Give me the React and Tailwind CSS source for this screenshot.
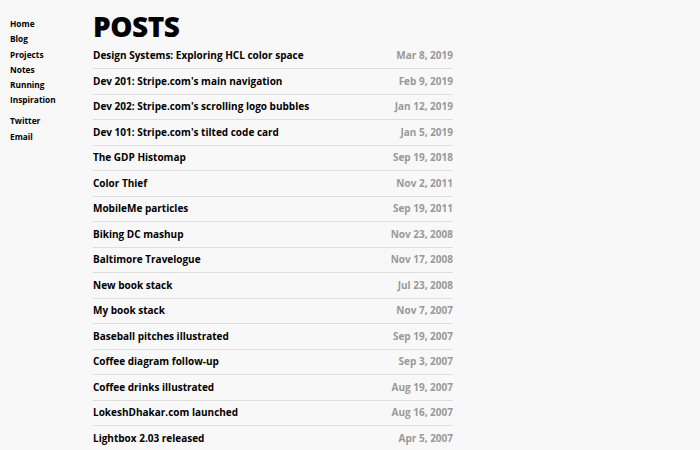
const posts = [
  ["Design Systems: Exploring HCL color space", "Mar 8, 2019"],
  ["Dev 201: Stripe.com's main navigation", "Feb 9, 2019"],
  ["Dev 202: Stripe.com's scrolling logo bubbles", "Jan 12, 2019"],
  ["Dev 101: Stripe.com's tilted code card", "Jan 5, 2019"],
  ["The GDP Histomap", "Sep 19, 2018"],
  ["Color Thief", "Nov 2, 2011"],
  ["MobileMe particles", "Sep 19, 2011"],
  ["Biking DC mashup", "Nov 23, 2008"],
  ["Baltimore Travelogue", "Nov 17, 2008"],
  ["New book stack", "Jul 23, 2008"],
  ["My book stack", "Nov 7, 2007"],
  ["Baseball pitches illustrated", "Sep 19, 2007"],
  ["Coffee diagram follow-up", "Sep 3, 2007"],
  ["Coffee drinks illustrated", "Aug 19, 2007"],
  ["LokeshDhakar.com launched", "Aug 16, 2007"],
  ["Lightbox 2.03 released", "Apr 5, 2007"],
];

export default function App() {
  return (
    <div className="min-h-[450px] w-[700px] bg-[#f8f8f8] font-['Open_Sans',sans-serif] text-black flex">
      <nav className="w-[93px] pl-[10px] pt-[16px] text-[8.3px] font-bold leading-[15.3px]">
        <div>Home</div>
        <div>Blog</div>
        <div>Projects</div>
        <div>Notes</div>
        <div>Running</div>
        <div>Inspiration</div>
        <div className="mt-[5.5px]">Twitter</div>
        <div>Email</div>
      </nav>
      <main className="w-[360px]">
        <h1 className="text-[28px] font-black leading-none pt-[12px] pb-[3.5px] tracking-[-0.5px]">POSTS</h1>
        <ul>
          {posts.map(([t, d], i) => (
            <li key={i} className="h-[25.5px] flex items-center justify-between border-b border-[#dddddd] text-[10px] font-bold">
              <span>{t}</span>
              <span className="text-[#999999]">{d}</span>
            </li>
          ))}
        </ul>
      </main>
    </div>
  );
}
